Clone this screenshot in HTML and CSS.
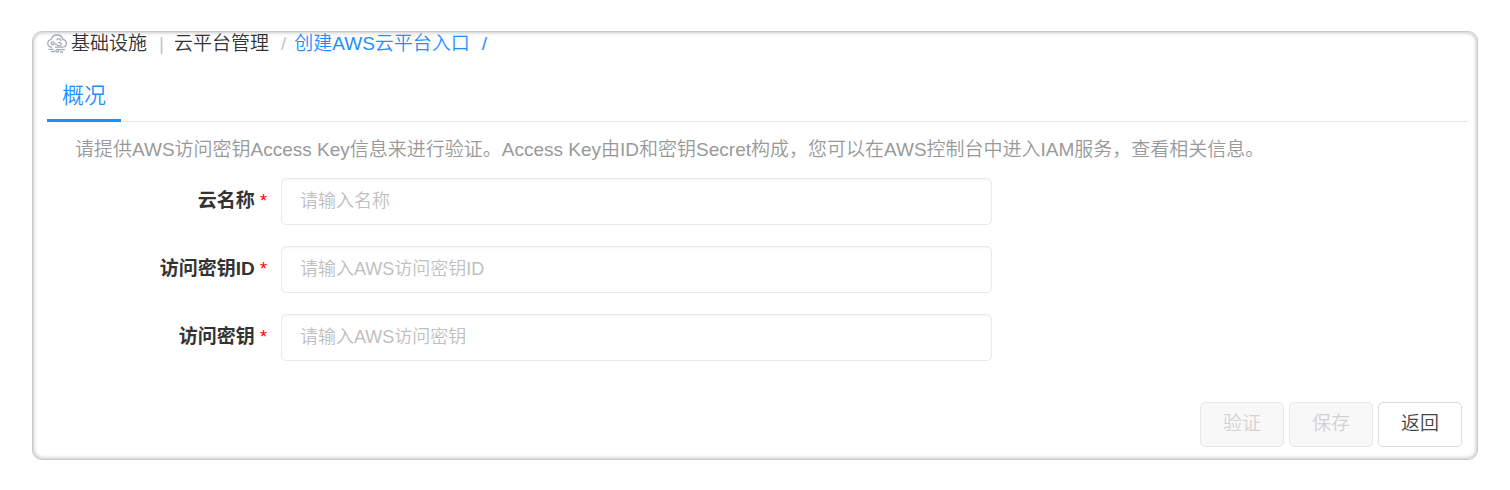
FILE: index.html
```
<!DOCTYPE html>
<html lang="zh-CN">
<head>
<meta charset="utf-8">
<title>创建AWS云平台入口</title>
<link rel="stylesheet" href="styles.css">
</head>
<body>
<main class="panel">
  <nav class="breadcrumb" aria-label="面包屑">
    <svg class="cloud" viewBox="0 0 20 20" aria-hidden="true">
      <path d="M4.600 13.200C2.300 13 .8 11.600 .8 9.500c0-2 1.300-3.500 3.300-3.800C4.800 2.900 7.200 1 10 1s5.200 1.800 5.900 4.500c2 .3 3.400 1.900 3.400 3.900 0 2.200-1.600 3.700-3.900 3.800H8.500"/>
      <path d="M7 9.300l4.100 2.200c1.200 .8 3 .2 3-1.300 0-1.400-1.500-2.200-2.700-1.500M10 5.700c1-1.600 3.700-1.200 4 1"/>
      <circle cx="5.600" cy="9.300" r="1.500"/>
      <path d="M2 15.300h4M12.500 15.700h5M4.500 17.500h3M13.500 18h2"/>
      <circle cx="10.300" cy="16.800" r="1.400"/>
    </svg>
    <a class="crumb" href="#">基础设施</a>
    <span class="bar">|</span>
    <a class="crumb" href="#">云平台管理</a>
    <span class="slash">/</span>
    <a class="crumb current" href="#" aria-current="page">创建AWS云平台入口</a>
    <span class="slash last">/</span>
  </nav>
  <div class="tabs" role="tablist">
    <button class="tab" type="button" role="tab" aria-selected="true">概况</button>
  </div>
  <p class="intro">请提供AWS访问密钥Access Key信息来进行验证。Access Key由ID和密钥Secret构成，您可以在AWS控制台中进入IAM服务，查看相关信息。</p>
  <form class="form">
    <div class="row">
      <label class="label" for="name">云名称 <span class="required">*</span></label>
      <input class="input" id="name" type="text" placeholder="请输入名称">
    </div>
    <div class="row">
      <label class="label" for="key-id">访问密钥ID <span class="required">*</span></label>
      <input class="input" id="key-id" type="text" placeholder="请输入AWS访问密钥ID">
    </div>
    <div class="row">
      <label class="label" for="key">访问密钥 <span class="required">*</span></label>
      <input class="input" id="key" type="text" placeholder="请输入AWS访问密钥">
    </div>
    <div class="actions">
      <button class="button" type="button" disabled>验证</button>
      <button class="button" type="button" disabled>保存</button>
      <button class="button" type="button">返回</button>
    </div>
  </form>
</main>
</body>
</html>
```
FILE: styles.css
```
* {
  box-sizing: border-box;
}

body {
  margin: 31px 32px;
  background: #fff;
  font-family: "Liberation Sans", "Noto Sans CJK SC", sans-serif;
  font-size: 19px;
  font-weight: 350;
  line-height: 24px;
  color: #333;
}

.panel {
  padding: 0 9px 12px 14px;
  border: 1px solid #c8c8c8;
  border-radius: 10px;
  box-shadow: inset 0 0 4px #aaa;
}

.breadcrumb {
  display: flex;
  align-items: center;
}

.cloud {
  width: 20px;
  height: 20px;
  margin-right: 4px;
  fill: none;
  stroke: #a3acb5;
  stroke-width: 1.3;
  stroke-linecap: round;
}

.crumb {
  color: #333;
  text-decoration: none;
}

.bar,
.slash {
  color: #c4c4c4;
}

.bar {
  margin: 0 10px 0 12px;
}

.slash {
  margin: 0 8px 0 12px;
}

.current,
.last {
  color: #1e8fff;
}

.tabs {
  display: flex;
  margin-top: 16px;
  border-bottom: 1px solid #e1e9f2;
}

.tab {
  height: 50px;
  margin-bottom: -1px;
  padding: 0 15px;
  border: 0;
  border-bottom: 3px solid #1890ff;
  background: none;
  font: inherit;
  font-size: 22px;
  color: #1e8fff;
}

.intro {
  margin: 16px 28px;
  color: #999;
}

.form {
  display: flex;
  flex-direction: column;
  gap: 21px;
}

.row {
  display: grid;
  grid-template-columns: 220px 50%;
  column-gap: 14px;
  align-items: center;
}

.label {
  padding-bottom: 2px;
  text-align: right;
  font-weight: 700;
}

.required {
  color: #f00;
  font-size: 18px;
  font-weight: 400;
}

.input {
  width: 100%;
  height: 47px;
  padding: 0 18px 1px;
  border: 1px solid #e4ebf1;
  border-radius: 5px;
  background: #fff;
  box-shadow: inset 0 1px 2px #f3f3f3;
  font: inherit;
  font-size: 18px;
  color: #333;
}

.input::placeholder {
  color: #bfbfbf;
  opacity: 1;
}

.actions {
  display: flex;
  justify-content: flex-end;
  gap: 5px;
  margin-top: 20px;
  padding-right: 6px;
}

.button {
  height: 45px;
  padding: 0 22px 2px;
  border: 1px solid #dcdcdc;
  border-radius: 5px;
  background: #fff;
  font: inherit;
  color: #444;
}

.button:disabled {
  border-color: #e8e8e8;
  background: #f8f8f8;
  color: #d2d2d2;
}
```
